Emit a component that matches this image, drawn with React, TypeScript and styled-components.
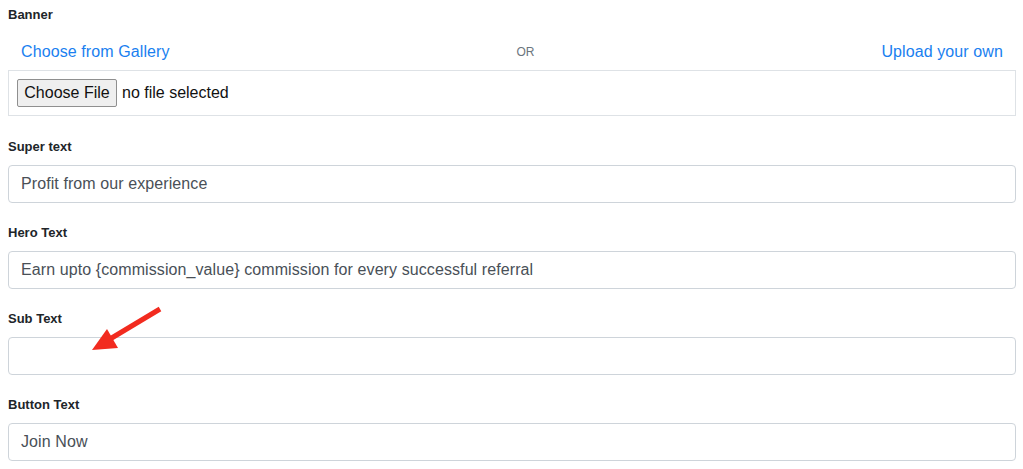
import React from "react";
import styled, { createGlobalStyle } from "styled-components";

const Global = createGlobalStyle`
  html, body { margin: 0; padding: 0; background: #fff; }
  body { font-family: "Liberation Sans", Arial, sans-serif; }
`;

const Page = styled.div`
  position: relative;
  padding: 4px 7px 0 8px;
`;

const Group = styled.div<{ $gap?: number }>`
  margin-bottom: ${(p) => p.$gap ?? 19}px;
`;

const Label = styled.div<{ $mb?: number }>`
  font-size: 13px;
  line-height: 20px;
  padding-top: 1px;
  font-weight: 700;
  color: #212529;
  margin-bottom: ${(p) => p.$mb ?? 8}px;
`;

const SourceRow = styled.div`
  display: flex;
  justify-content: space-between;
  align-items: center;
  padding: 6px 13px 0 13px;
  height: 42px;
  box-sizing: border-box;
`;

const LinkText = styled.a`
  font-size: 16px;
  letter-spacing: 0.1px;
  color: #1a7ff0;
  text-decoration: none;
  cursor: pointer;
`;

const Or = styled.span`
  font-size: 12px;
  color: #6c757d;
`;

const FileBox = styled.div`
  display: flex;
  align-items: center;
  gap: 5px;
  height: 46px;
  box-sizing: border-box;
  border: 1px solid #dee2e6;
  padding: 0 8px;
`;

const FileButton = styled.button`
  height: 28px;
  width: 100px;
  box-sizing: border-box;
  font-family: inherit;
  font-size: 16px;
  color: #111;
  background: #efefef;
  border: 1px solid #8f8f8f;
  border-radius: 2px;
  padding: 0;
`;

const FileName = styled.span`
  font-size: 16px;
  color: #111;
`;

const TextInput = styled.input`
  display: block;
  width: 100%;
  height: 38px;
  box-sizing: border-box;
  border: 1px solid #ced4da;
  border-radius: 4px;
  padding: 0 12px;
  font-family: inherit;
  font-size: 16px;
  letter-spacing: 0.09px;
  color: #495057;
  background: #fff;
  outline: none;
`;

const Arrow = styled.svg`
  position: absolute;
  left: 88px;
  top: 304px;
  pointer-events: none;
`;

const fields = [
  { label: "Super text", value: "Profit from our experience" },
  { label: "Hero Text", value: "Earn upto {commission_value} commission for every successful referral" },
  { label: "Sub Text", value: "" },
  { label: "Button Text", value: "Join Now" },
];

export default function App() {
  return (
    <>
      <Global />
      <Page>
        <Group $gap={20}>
          <Label $mb={3}>Banner</Label>
          <SourceRow>
            <LinkText>Choose from Gallery</LinkText>
            <Or>OR</Or>
            <LinkText>Upload your own</LinkText>
          </SourceRow>
          <FileBox>
            <FileButton type="button">Choose File</FileButton>
            <FileName>no file selected</FileName>
          </FileBox>
        </Group>
        {fields.map((f) => (
          <Group key={f.label}>
            <Label>{f.label}</Label>
            <TextInput defaultValue={f.value} readOnly />
          </Group>
        ))}
        <Arrow width="80" height="52" viewBox="0 0 80 52">
          <line x1="72" y1="5" x2="22" y2="35" stroke="#f22b1f" strokeWidth="5" strokeLinecap="butt" />
          <polygon points="4,46 19,25 30,44" fill="#f22b1f" />
        </Arrow>
      </Page>
    </>
  );
}
